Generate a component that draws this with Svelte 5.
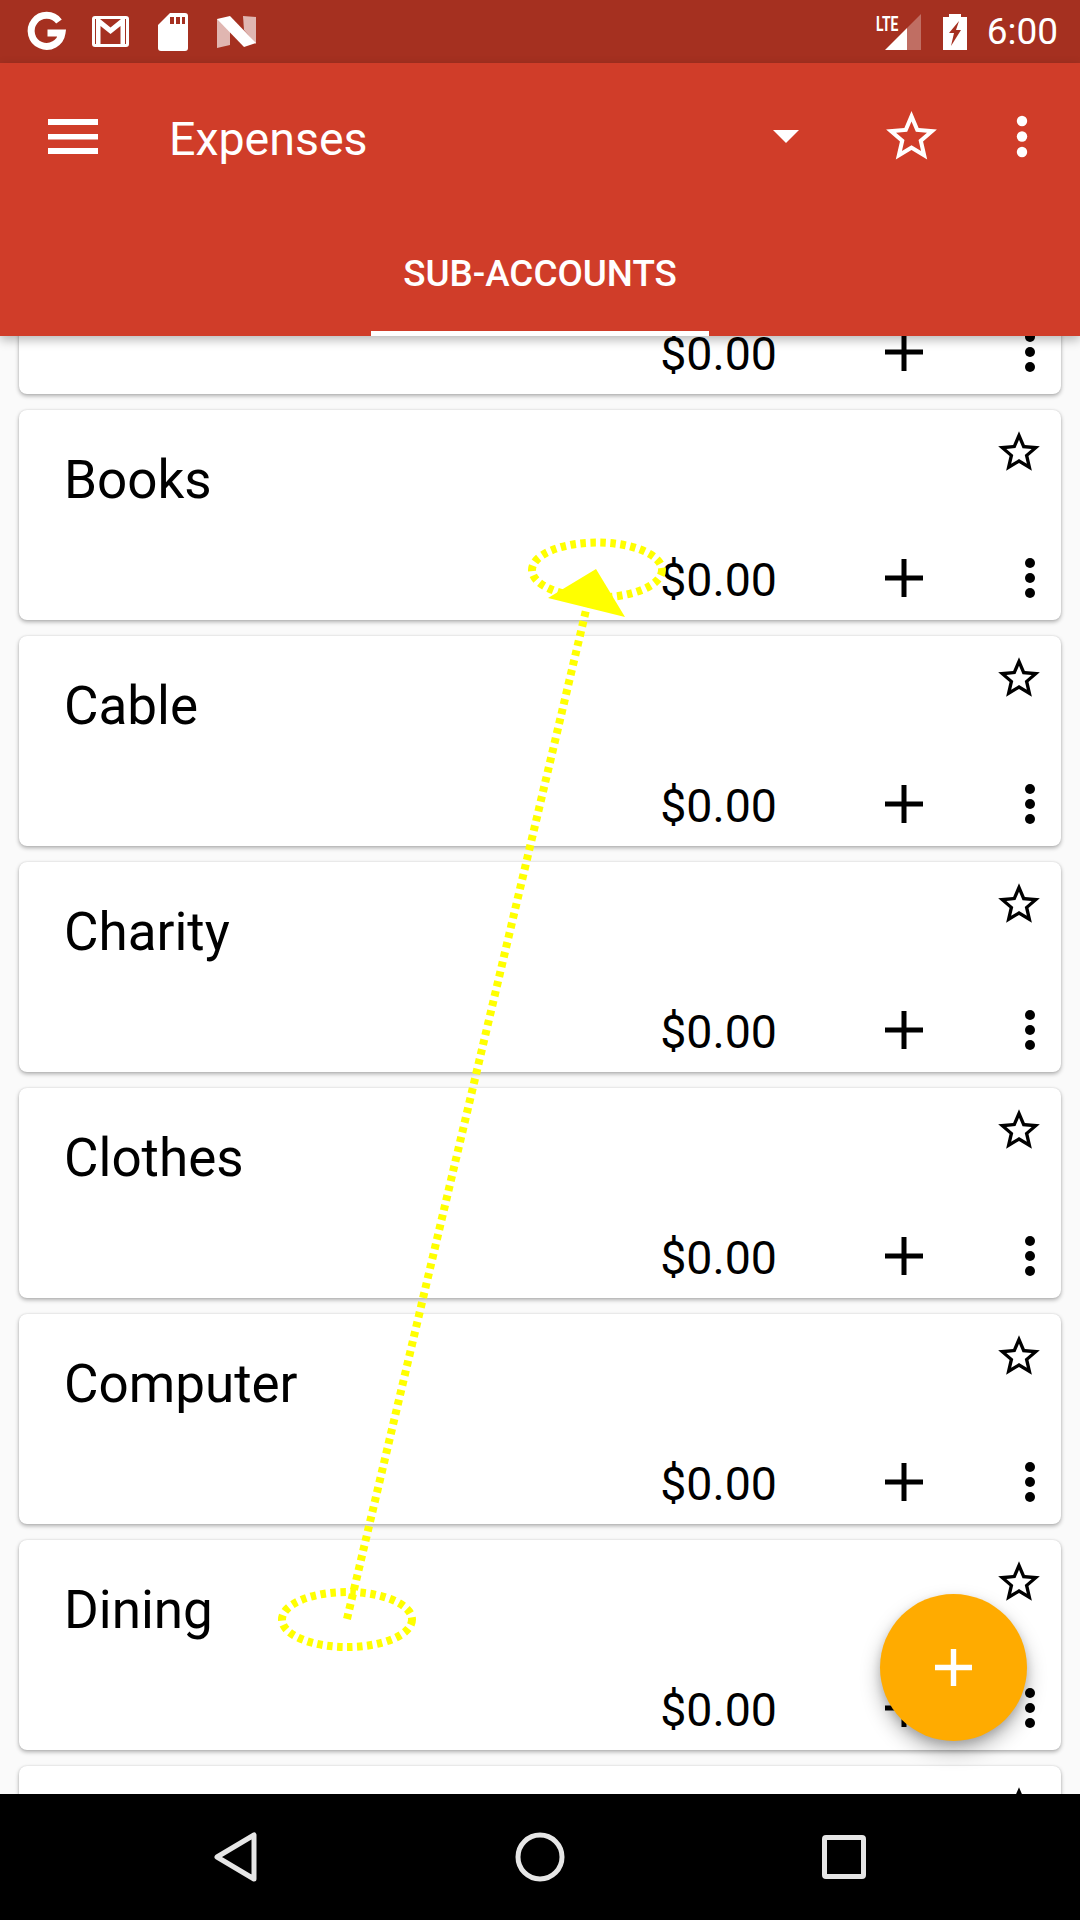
<script>
  const names = ['', 'Books', 'Cable', 'Charity', 'Clothes', 'Computer', 'Dining', ''];
  const star = 'M22 9.24l-7.19-.62L12 2 9.19 8.63 2 9.24l5.46 4.73L5.82 21 12 17.27 18.18 21l-1.63-7.03L22 9.24zM12 15.4l-3.76 2.27 1-4.28-3.32-2.88 4.38-.38L12 6.1l1.71 4.04 4.38.38-3.32 2.88 1 4.28L12 15.4z';
</script>

<div class="phone">
  <div class="status">
    <svg class="status-left" width="240" height="63" viewBox="0 0 240 63" fill="none">
      <path d="M59 21.500A15.500 15.500 0 1 0 62 33H47.500" stroke="#fff" stroke-width="7"/>
      <rect x="92" y="16" width="37" height="31" rx="3" fill="#fff"/>
      <path d="M95 19h31v25h-31z" fill="#a53020"/>
      <path d="M96 19h4l10.500 8.500L121 19h4v25h-4.500V26l-10 8-10-8v18H96z" fill="#fff"/>
      <path d="M170 13h15a3 3 0 0 1 3 3v32a3 3 0 0 1-3 3h-24a3 3 0 0 1-3-3V25z" fill="#fff"/>
      <path d="M170 17h4v7h-4zM176 17h4v7h-4zM182 17h3v7h-3z" fill="#a53020"/>
    </svg>
    <svg class="n-logo" width="40" height="32" viewBox="0 0 40 32">
      <path d="M0 3l13 0v26L0 32z" fill="#fff" fill-opacity=".65"/>
      <path d="M26 0l13 1v27l-12-14z" fill="#fff" fill-opacity=".65"/>
      <path d="M0 3L13 0 39 27l-12 4z" fill="#fff"/>
    </svg>
    <div class="status-right">
      <span class="lte-wrap"><span class="lte">LTE</span></span>
      <svg class="signal" width="36" height="36" viewBox="0 0 36 36">
        <path d="M36 0V36H22V14z" fill="#fff" fill-opacity=".3"/>
        <path d="M22 14V36H0z" fill="#fff"/>
      </svg>
      <svg class="battery" width="24" height="36" viewBox="0 0 24 36">
        <path d="M6 0h12v3h6v33H0V3h6z" fill="#fff"/>
        <path d="M16 7L6 19h5L8 32 18 16h-5z" fill="#a53020"/>
      </svg>
      <span class="time">6:00</span>
    </div>
  </div>

  <header class="appbar">
    <div class="toolbar">
      <svg class="menu" width="50" height="36" viewBox="0 0 50 36" fill="#fff">
        <rect y="0" width="50" height="6"/><rect y="15" width="50" height="5.500"/><rect y="29" width="50" height="6"/>
      </svg>
      <span class="title">Expenses</span>
      <svg class="drop" width="26" height="13" viewBox="0 0 26 13"><path d="M0 0h26L13 13z" fill="#fff"/></svg>
      <svg class="bar-star" width="61" height="61" viewBox="0 0 24 24"><path d={star} fill="#fff"/></svg>
      <svg class="bar-dots" width="12" height="44" viewBox="0 0 12 44" fill="#fff">
        <circle cx="6" cy="6" r="5.200"/><circle cx="6" cy="21.500" r="5.200"/><circle cx="6" cy="37" r="5.200"/>
      </svg>
    </div>
    <div class="tabs"><div class="tab">SUB-ACCOUNTS</div></div>
  </header>

  <main class="list">
    <div class="scroller">
      {#each names as name}
        <article class="card">
          <div class="card-top">
            <span class="name">{name}</span>
            <svg class="star" width="50" height="50" viewBox="0 0 24 24"><path d={star} fill="#000"/></svg>
          </div>
          <div class="card-bottom">
            <span class="amount">$0.00</span>
            <svg class="plus" width="38" height="38" viewBox="0 0 38 38"><path d="M16.500 0h5v16.500H38v5H21.500V38h-5V21.500H0v-5h16.500z" fill="#000"/></svg>
            <svg class="dots" width="12" height="42" viewBox="0 0 12 42">
              <circle cx="6" cy="6" r="5"/><circle cx="6" cy="21" r="5"/><circle cx="6" cy="36" r="5"/>
            </svg>
          </div>
        </article>
      {/each}
    </div>
    <button class="fab" aria-label="Add">
      <svg width="37" height="37" viewBox="0 0 37 37"><path d="M15.800 0h5.400v15.800H37v5.400H21.200V37h-5.400V21.200H0v-5.400h15.800z" fill="#fff"/></svg>
    </button>
  </main>

  <nav class="nav">
    <svg width="46" height="52" viewBox="0 0 46 52" fill="none"><path d="M41 4V48L4 26z" stroke="#e6e6e6" stroke-width="5" stroke-linejoin="round"/></svg>
    <svg width="50" height="50" viewBox="0 0 50 50" fill="none"><circle cx="25" cy="25" r="22" stroke="#e6e6e6" stroke-width="5"/></svg>
    <svg width="44" height="44" viewBox="0 0 44 44" fill="none"><rect x="2.500" y="2.500" width="39" height="39" rx="1.500" stroke="#e6e6e6" stroke-width="5"/></svg>
  </nav>

  <svg class="annotation" width="1080" height="1920" viewBox="0 0 1080 1920" fill="none">
    <g stroke="#ffff00" stroke-width="8" stroke-dasharray="5.500 4.500">
      <ellipse cx="347" cy="1619.500" rx="65" ry="27.500"/>
      <ellipse cx="597" cy="570" rx="65" ry="27.500"/>
      <path d="M347 1619L587 606"/>
    </g>
    <path d="M596 569L548 598L625 617z" fill="#ffff00"/>
  </svg>
</div>

<style>
  :global(body) { margin: 0; }
  .phone {
    position: relative; width: 1080px; height: 1920px; display: flex; flex-direction: column;
    overflow: hidden; background: #fafafa; font-family: Roboto, sans-serif;
  }
  .status {
    flex: 0 0 63px; background: #a53020; display: flex; align-items: center; color: #fff;
  }
  .status-left { flex: none; }
  .n-logo { flex: none; margin-left: -23px; }
  .status-right { margin-left: auto; display: flex; align-items: center; padding-right: 22px; }
  .lte-wrap { width: 24px; height: 36px; margin-right: -15px; position: relative; }
  .lte {
    position: absolute; left: 0; top: 0; font-size: 21px; line-height: 21px; font-weight: 700;
    transform: scaleX(.66); transform-origin: left top; 
  }
  .signal { margin-right: 22px; }
  .battery { margin-right: 20px; }
  .time { font-size: 37px; line-height: 36px; }

  .appbar {
    flex: 0 0 273px; background: #d03d29; color: #fff; position: relative; z-index: 2;
    box-shadow: 0 4px 10px rgba(0,0,0,.28); display: flex; flex-direction: column;
  }
  .toolbar { height: 147px; display: flex; align-items: center; padding-left: 48px; padding-right: 52px; }
  .title { font-size: 46.500px; margin-left: 71px; margin-top: 5px; flex: 1; }
  .drop { margin-right: 82px; }
  .bar-star { margin-right: 74px; }
  .tabs { flex: 1; display: flex; justify-content: center; align-items: stretch; }
  .tab {
    width: 338px; box-sizing: border-box; border-bottom: 5px solid #fff; text-align: center; white-space: nowrap;
    font-size: 36.800px; font-weight: 500; line-height: 1; padding-top: 46px;
  }

  .list { flex: 1; min-height: 0; position: relative; overflow: hidden; }
  .scroller { margin-top: -152px; padding: 0 19px; display: flex; flex-direction: column; gap: 16px; }
  .card {
    height: 210px; box-sizing: border-box; background: #fff; border-radius: 8px; flex: none;
    box-shadow: 0 2px 4px rgba(0,0,0,.3), 0 0 2px rgba(0,0,0,.12);
    display: flex; flex-direction: column; justify-content: space-between;
  }
  .card-top { display: flex; justify-content: space-between; padding: 17px 17px 0 45px; }
  .name { font-size: 53px; line-height: 58px; margin-top: 24px; color: #000; }
  .card-bottom { display: flex; align-items: center; justify-content: flex-end; padding: 0 25px 13px 0; height: 58px; }
  .amount { font-size: 46.500px; line-height: 58px; margin-top: 4px; color: #000; }
  .plus { margin-left: 108px; }
  .dots { margin-left: 101px; }

  .fab {
    position: absolute; right: 53px; bottom: 53px; width: 147px; height: 147px; padding: 0; border: 0; border-radius: 50%;
    background: #ffab00; box-shadow: 0 10px 20px rgba(0,0,0,.28), 0 4px 8px rgba(0,0,0,.15);
    display: flex; align-items: center; justify-content: center;
  }
  .fab svg { display: block; }

  .nav {
    flex: 0 0 126px; background: #000; position: relative; z-index: 2;
    display: flex; align-items: center; padding-left: 213px; 
  }
  .nav svg:nth-child(2) { margin-left: 256px; }
  .nav svg:nth-child(3) { margin-left: 257px; }
  .annotation { position: absolute; left: 0; top: 0; z-index: 3; pointer-events: none; }
</style>
